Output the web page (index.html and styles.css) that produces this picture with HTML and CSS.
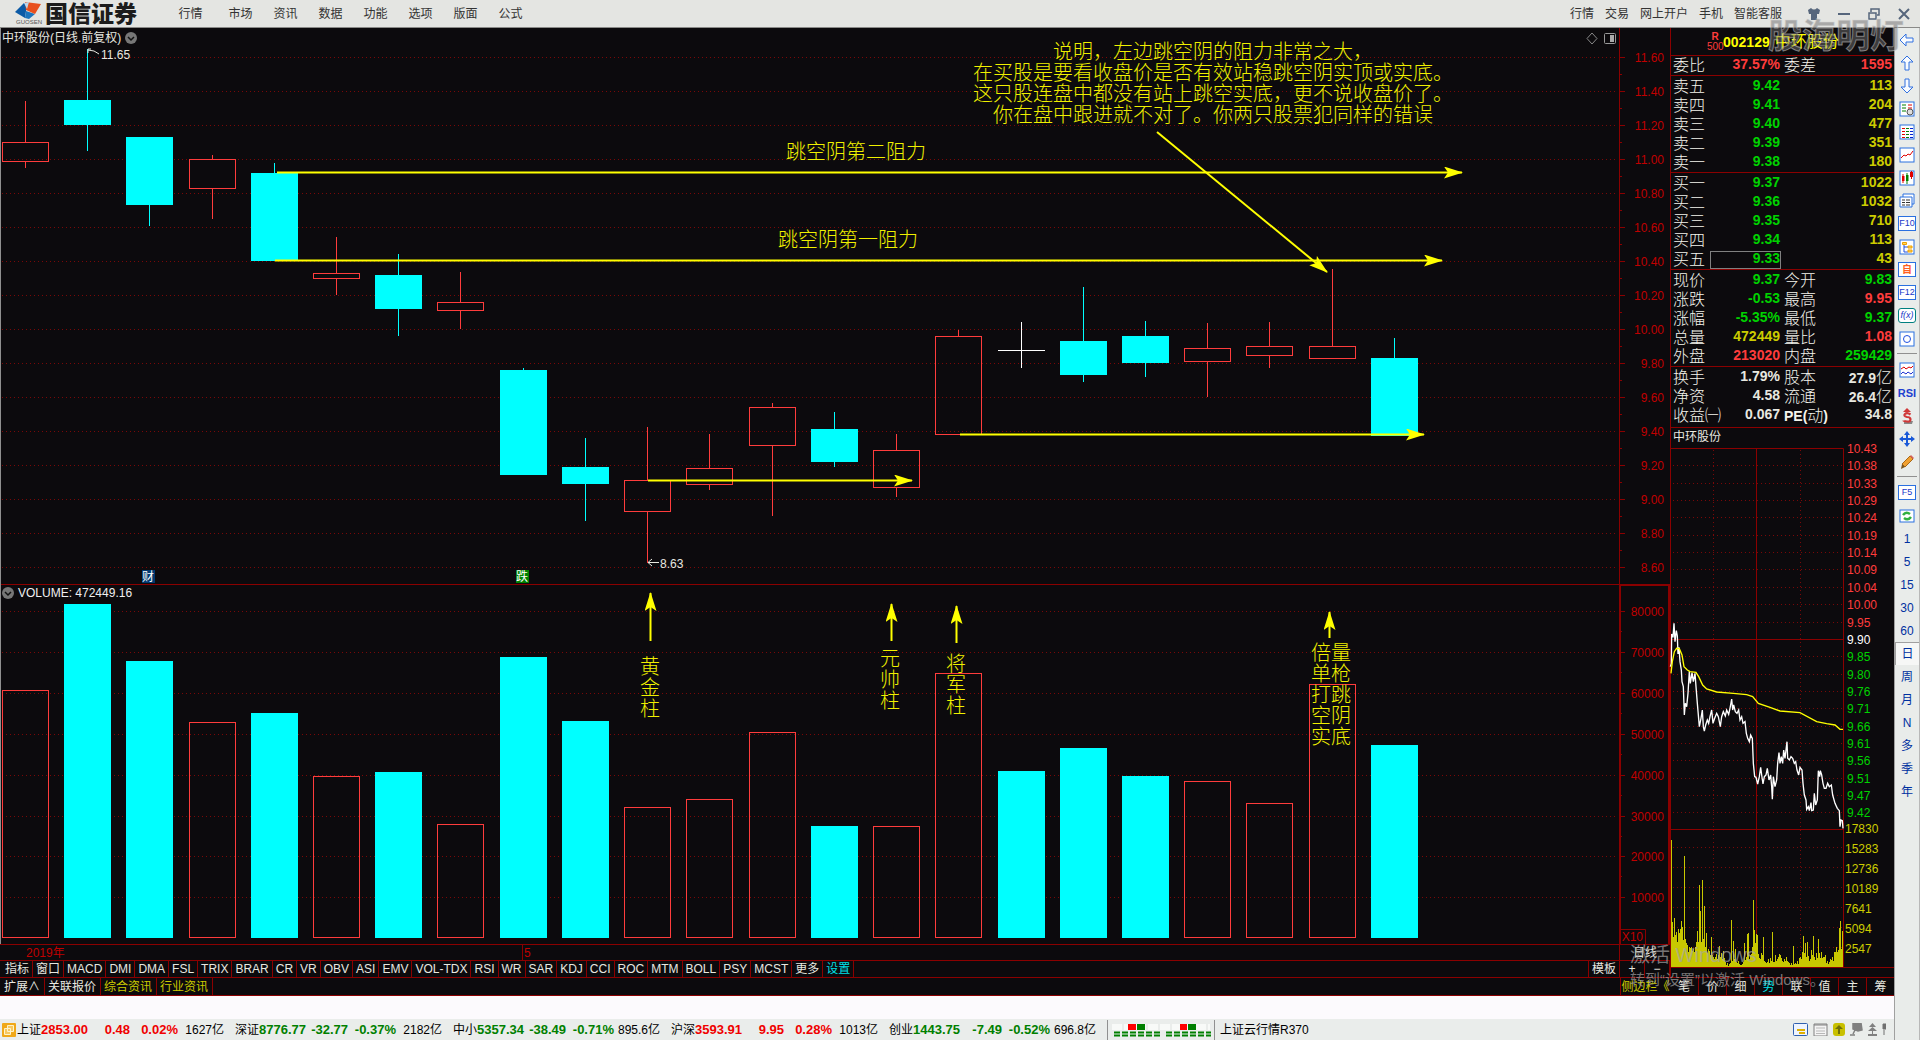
FILE: index.html
```html
<!DOCTYPE html>
<html lang="zh-CN">
<head>
<meta charset="utf-8">
<title>国信证券 - 中环股份</title>
<link rel="stylesheet" href="styles.css">
</head>
<body>
<header class="titlebar">
  <div class="brand">
    <div class="brand-mark">
      <svg width="28" height="17" viewBox="0 0 28 17" aria-hidden="true">
        <path d="M0 10 9 1l3 1-2 14z" fill="#0b5aa6"/><path d="M10 16 11 9l9 3-6 5z" fill="#1c74bd"/>
        <path d="M10 0 26 2l-6 10-9-4z" fill="#e8501e"/><path d="M9 1l5-1-2 7z" fill="#bdd5ea"/>
      </svg>
      <small>GUOSEN</small>
    </div>
    <strong>国信证券</strong>
  </div>
  <nav class="menu">
    <button>行情</button><button>市场</button><button>资讯</button><button>数据</button><button>功能</button><button>选项</button><button>版面</button><button>公式</button>
  </nav>
  <nav class="links">
    <button>行情</button><button>交易</button><button>网上开户</button><button>手机</button><button>智能客服</button>
  </nav>
  <div class="window-controls">
    <button aria-label="换肤"><svg width="12" height="12" viewBox="0 0 12 12"><path d="M0 2 3 0q3 3 6 0l3 2-1 4H9v6H3V6H1z" fill="#56667c"/></svg></button>
    <button aria-label="最小化"><svg width="12" height="12" viewBox="0 0 12 12"><path d="M0 6h12" stroke="#56667c" stroke-width="2"/></svg></button>
    <button aria-label="还原"><svg width="12" height="12" viewBox="0 0 12 12"><path d="M3 4V1h8v6H9M1 5h7v6H1z" fill="none" stroke="#56667c" stroke-width="1.5"/></svg></button>
    <button aria-label="关闭"><svg width="12" height="12" viewBox="0 0 12 12"><path d="M1 1l10 10M11 1 1 11" stroke="#56667c" stroke-width="2"/></svg></button>
  </div>
  <div class="watermark-name">股海明灯</div>
</header>

<div class="shell">
  <main class="desk">
    <div class="work">
      <section class="charts">
        <svg id="kline" class="kline" viewBox="0 28 1670 916" role="img" aria-label="中环股份日线"></svg>
        <div class="dates"><span>2019年</span><span class="month">5</span><button class="period">日线</button></div>
        <div class="tabs indicators" id="indicators"></div>
      </section>

      <aside class="quote">
        <h1><span class="flag"><b>R</b><i>500</i></span><b>002129</b><span class="name">中环股份</span></h1>
        <table><colgroup><col class="c1"><col class="c2"><col class="c3"><col></colgroup>
          <tbody><tr><th>委比</th><td class="r">37.57%</td><th>委差</th><td class="r">1595</td></tr></tbody>
          <tbody>
            <tr><th>卖五</th><td class="g">9.42</td><th></th><td class="y">113</td></tr>
            <tr><th>卖四</th><td class="g">9.41</td><th></th><td class="y">204</td></tr>
            <tr><th>卖三</th><td class="g">9.40</td><th></th><td class="y">477</td></tr>
            <tr><th>卖二</th><td class="g">9.39</td><th></th><td class="y">351</td></tr>
            <tr><th>卖一</th><td class="g">9.38</td><th></th><td class="y">180</td></tr>
          </tbody>
          <tbody>
            <tr><th>买一</th><td class="g">9.37</td><th></th><td class="y">1022</td></tr>
            <tr><th>买二</th><td class="g">9.36</td><th></th><td class="y">1032</td></tr>
            <tr><th>买三</th><td class="g">9.35</td><th></th><td class="y">710</td></tr>
            <tr><th>买四</th><td class="g">9.34</td><th></th><td class="y">113</td></tr>
            <tr><th>买五</th><td class="g picked">9.33</td><th></th><td class="y">43</td></tr>
          </tbody>
          <tbody>
            <tr><th>现价</th><td class="g">9.37</td><th>今开</th><td class="g">9.83</td></tr>
            <tr><th>涨跌</th><td class="g">-0.53</td><th>最高</th><td class="r">9.95</td></tr>
            <tr><th>涨幅</th><td class="g">-5.35%</td><th>最低</th><td class="g">9.37</td></tr>
            <tr><th>总量</th><td class="y">472449</td><th>量比</th><td class="r">1.08</td></tr>
            <tr><th>外盘</th><td class="r">213020</td><th>内盘</th><td class="g">259429</td></tr>
          </tbody>
          <tbody>
            <tr><th>换手</th><td>1.79%</td><th>股本</th><td>27.9<span>亿</span></td></tr>
            <tr><th>净资</th><td>4.58</td><th>流通</th><td>26.4<span>亿</span></td></tr>
            <tr><th>收益㈠</th><td>0.067</td><th><b>PE(</b>动<b>)</b></th><td>34.8</td></tr>
          </tbody>
        </table>
        <h2>中环股份</h2>
        <svg id="intraday" class="intraday" viewBox="1671 448 223 529" role="img" aria-label="中环股份分时"></svg>
      </aside>
      <div class="activate"><p>激活 Windows</p><p class="hint">转到“设置”以激活 Windows。</p></div>
    </div>
    <div class="foot">
      <div class="tabs"><button>扩展∧</button><button>关联报价</button><button class="gold">综合资讯</button><button class="gold">行业资讯</button></div>
      <button class="collapse">侧边栏《</button>
      <div class="side-tabs"><button>笔</button><button>价</button><button>细</button><button class="on">势</button><button>联</button><button>值</button><button>主</button><button>筹</button></div>
    </div>
    <div class="blank"></div>
    <footer class="status">
      <svg width="14" height="14" viewBox="0 0 14 14" aria-hidden="true"><rect width="14" height="14" rx="1" fill="#f0a818"/><path d="M5.500 2.500h6v6h-6zM2.500 5.500h6v6h-6z" fill="#f6c860" stroke="#fff3c8"/></svg>
      <div class="indices">
        <div class="index up"><span>上证</span><b>2853.00</b><b>0.48</b><b>0.02%</b><span>1627亿</span></div>
        <div class="index"><span>深证</span><b>8776.77</b><b>-32.77</b><b>-0.37%</b><span>2182亿</span></div>
        <div class="index"><span>中小</span><b>5357.34</b><b>-38.49</b><b>-0.71%</b><span>895.6亿</span></div>
        <div class="index up"><span>沪深</span><b>3593.91</b><b>9.95</b><b>0.28%</b><span>1013亿</span></div>
        <div class="index"><span>创业</span><b>1443.75</b><b>-7.49</b><b>-0.52%</b><span>696.8亿</span></div>
      </div>
      <div class="heat"><svg width="100" height="14" viewBox="0 0 100 14" aria-hidden="true">
        <path d="M3 11h46M55 11h46" stroke="#008000" stroke-width="5" stroke-dasharray="6 2"/><path d="M2 11h98" stroke="#e9ecea"/>
        <path d="M1 4h98" stroke="#f8faf8" stroke-width="6" stroke-dasharray="10 2"/>
        <path d="M17 1h8v6h-8zM69 1h7v6h-7z" fill="#f00"/><path d="M26 1h8v6h-8zM77 1h8v6h-8z" fill="#008000"/></svg></div>
      <span class="server">上证云行情R370</span>
      <div class="tray">
        <svg width="15" height="13" viewBox="0 0 15 13"><rect x=".5" y=".5" width="14" height="12" rx="1" fill="#eef4ff" stroke="#3060b0"/><path d="M4 7h8M6 10h6" stroke="#e0b000" stroke-width="2"/></svg>
        <svg width="15" height="13" viewBox="0 0 15 13"><path d="M1 1h13v12H1zM1 2h13" fill="#f4f4f4" stroke="#808080"/><path d="M3 5h9M3 8h9M3 10.500h9" stroke="#b8b8b8"/></svg>
        <svg width="12" height="13" viewBox="0 0 12 13"><rect width="12" height="13" rx="3" fill="#c8c000"/><path d="M6 2 10 6H7v5H5V6H2z" fill="#70700a"/></svg>
        <svg width="13" height="13" viewBox="0 0 13 13"><path d="M3 0h8l1 7-4 1-5-2zM5 7 3 11M0 12h5" fill="#808080" stroke="#808080" stroke-width="1.500"/></svg>
        <svg width="9" height="13" viewBox="0 0 9 13"><path d="M4.500 0 8 4H1zM4.500 4 9 8H0zM4 8h1v3h4v2H0v-2h4z" fill="#808080"/></svg>
        <svg width="4" height="13" viewBox="0 0 4 13"><path d="M1 1h3v5H1zM2 7v5" fill="#707070" stroke="#707070"/></svg>
      </div>
    </footer>
  </main>

  <nav class="toolbar">
    <button aria-label="后退"><svg viewBox="0 0 16 16"><path d="M1 8 7 2v4h7v4H7v4z" class="arrow"/></svg></button>
    <button aria-label="上"><svg viewBox="0 0 16 16"><path d="M8 1 14 7h-4v8H6V7H2z" class="arrow"/></svg></button>
    <button aria-label="下"><svg viewBox="0 0 16 16"><path d="M8 15 14 9h-4V1H6v8H2z" class="arrow"/></svg></button>
    <button aria-label="自选报价"><svg viewBox="0 0 16 16"><rect class="box" x="1" y="1" width="14" height="14"/><path d="M3 4h4M3 7h4M3 10h4" stroke="#008000"/><path d="M9 4h4M9 7h4" stroke="#e00000"/><circle cx="11" cy="11" r="3" fill="#ddd" stroke="#555"/></svg></button>
    <button aria-label="行情列表"><svg viewBox="0 0 16 16"><rect class="box" x="1" y="1" width="14" height="14"/><path d="M3 4.500h3M3 7.500h3M3 10.500h3M3 13.500h3" stroke="#e00000"/><path d="M7 4.500h3M7 7.500h3M7 10.500h3M7 13.500h3" stroke="#008000"/><path d="M11 4.500h3M11 7.500h3M11 10.500h3M11 13.500h3" stroke="#0020d0"/></svg></button>
    <button aria-label="分时走势"><svg viewBox="0 0 16 16"><rect class="box" x="1" y="1" width="14" height="14"/><path d="M2 11l3-3 2 1 2-2 2 1 3-4" fill="none" stroke="#e00000"/></svg></button>
    <button aria-label="K线"><svg viewBox="0 0 16 16"><rect class="box" x="1" y="1" width="14" height="14"/><path d="M4 4v9M12.500 1v8" stroke="#e00000"/><path d="M3 6h2.500v5H3zM11 2h3v5h-3z" fill="#e00000"/><path d="M8 3v11" stroke="#008000"/><path d="M7 5h2.500v6H7z" fill="#008000"/></svg></button>
    <button aria-label="多窗口"><svg viewBox="0 0 16 16"><path class="box" d="M4 4V1h11v10h-2"/><path class="box" d="M1 4h12v10H1z"/><path d="M3 7h3m1 0h4M3 9.500h3m1 0h4M3 12h3m1 0h4" stroke="#333"/></svg></button>
    <button class="key">F10</button>
    <button aria-label="树形"><svg viewBox="0 0 16 16"><rect class="box" x="1" y="1" width="14" height="14"/><path d="M5 5v8h4M5 8h4" fill="none" stroke="#2050e0"/><path d="M3.500 3.500h4v2h-4zM9 7h4v2H9zM9 11h4v2H9z" fill="#ffd860" stroke="#f0a000"/></svg></button>
    <button class="key own">自</button>
    <button class="key">F12</button>
    <button class="key fx">f(x)</button>
    <button aria-label="圆"><svg viewBox="0 0 16 16"><rect class="box" x="1" y="1" width="14" height="14"/><circle cx="8" cy="8" r="3.500" fill="none" stroke="#2050e0"/></svg></button>
    <hr>
    <button aria-label="叠加"><svg viewBox="0 0 16 16"><rect class="box" x="1" y="1" width="14" height="14"/><path d="M2 7l3-2 2 2 3-2 2 1 2-2" fill="none" stroke="#e00000"/><path d="M2 12l2-2 3 2 2-2 3 2 2-2" fill="none" stroke="#2030d0"/></svg></button>
    <button class="rsi">RSI</button>
    <button aria-label="资金"><svg viewBox="0 0 16 16"><path d="M5 13h9l-1 3H5z" fill="#888"/><path d="M8 0 12 4H4z" fill="#d03838"/><path d="M11.500 6.500Q8 4 6 6t2 3q3.500 0 3.500 2.500t-3.500 2-3.500-1" fill="none" stroke="#d03838" stroke-width="2.200"/></svg></button>
    <button aria-label="移动"><svg viewBox="0 0 16 16"><path d="M8 0 11 4H5zM8 16 5 12h6zM0 8 4 5v6zM16 8 12 11V5zM7 3h2v4h4v2H9v4H7V9H3V7h4z" fill="#1858d8"/></svg></button>
    <button aria-label="画线"><svg viewBox="0 0 16 16"><path d="M3 10 11 2l3 3-8 8z" fill="#f0a030" stroke="#a86818"/><path d="M3 10l3 3-4 2z" fill="#7a5520"/><path d="M11 2l1-1 3 3-1 1z" fill="#d86060"/></svg></button>
    <hr>
    <button class="key">F5</button>
    <button aria-label="刷新"><svg viewBox="0 0 16 16"><rect class="box" x="1" y="2" width="14" height="12"/><path d="M4 7q3-4 7-1M12 9q-3 4-7 1" fill="none" stroke="#30b040" stroke-width="2.500"/></svg></button>
    <button>1</button><button>5</button><button>15</button><button>30</button><button>60</button><button class="active">日</button><button>周</button><button>月</button><button>N</button><button>多</button><button>季</button><button>年</button>
  </nav>
</div>
<script src="charts.js"></script>
</body>
</html>
```
FILE: styles.css
```css
* { box-sizing: border-box; margin: 0; padding: 0; }
body {
  min-height: 100vh;
  display: flex;
  flex-direction: column;
  background: #e9ecea;
  color: #e8e8e0;
  font: 12px/14px "Liberation Sans", "Noto Sans CJK SC", sans-serif;
  overflow-x: hidden;
}
button {
  background: none;
  border: 0;
  color: inherit;
  font: inherit;
  white-space: nowrap;
  cursor: pointer;
}
svg { display: block; }

/* title bar */
.titlebar {
  position: relative;
  display: flex;
  align-items: center;
  height: 28px;
  background: #e4e5e2;
  border-bottom: 1px solid #8a8a88;
  color: #333;
}
.brand { display: flex; align-items: center; width: 168px; padding-left: 15px; gap: 2px; }
.brand-mark { width: 28px; }
.brand small { display: block; font-size: 6px; line-height: 6px; text-align: center; color: #555; }
.brand strong { font-size: 23px; line-height: 26px; font-weight: 900; color: #1c1c1c; white-space: nowrap; }
.menu { display: flex; flex: 1; }
.menu button { width: 45px; height: 26px; }
.menu button:first-child { margin-right: 5px; }
.links { display: flex; gap: 11px; }
.window-controls { display: flex; gap: 18px; padding: 0 10px 0 26px; }
.window-controls svg { margin: 0 auto; }
.watermark-name {
  position: absolute;
  right: 16px;
  top: 14px;
  z-index: 3;
  font-size: 34px;
  line-height: 44px;
  font-weight: 700;
  color: rgba(110, 110, 110, .5);
  -webkit-text-stroke: 1px rgba(215, 215, 215, .5);
  pointer-events: none;
}

/* frame */
.shell { display: flex; flex: 1; }
.desk { flex: 1; min-width: 0; display: flex; flex-direction: column; }
.work { position: relative; display: grid; grid-template-columns: minmax(0, 1fr) 224px; background: #0c0a0d; }
.charts { min-width: 0; }
.kline, .intraday { width: 100%; height: auto; overflow: visible; }
.kline text, .intraday text { font-family: "Liberation Sans", "Noto Sans CJK SC", sans-serif; font-size: 12px; }
.kline .note { font-family: "Noto Sans CJK SC", sans-serif; font-size: 20px; font-weight: 300; fill: #f0f000; text-anchor: middle; }
.kline .axis { fill: #c00000; text-anchor: end; }
.line { stroke: #8b0000; fill: none; }
.dots { stroke: #7a0808; stroke-dasharray: 1 3; fill: none; }

.dates {
  display: grid;
  grid-template-columns: 523px 1fr 51px;
  height: 16px;
  border-top: 1px solid #8b0000;
  color: #c00000;
  line-height: 16px;
}
.dates span:first-child { padding-left: 26px; border-right: 1px solid #8b0000; }
.month { padding-left: 1px; }
.period { border-left: 1px solid #8b0000; color: #e8e8e0; text-align: center; }
.tabs { display: flex; min-width: 0; }
.tabs button { padding: 0 3px; border-right: 1px solid #8b0000; line-height: 16px; }
.indicators { height: 17px; border-top: 1px solid #8b0000; padding-left: 2px; }
.indicators .push { margin-left: auto; padding: 0 3px; border-left: 1px solid #8b0000; }
.indicators .zoom { width: 25px; }
.indicators .on, .side-tabs .on { color: #00e0e8; }

/* quote panel */
.quote { border-left: 1px solid #8b0000; background: #0c0a0d; }
.quote h1 {
  display: flex;
  align-items: center;
  height: 28px;
  padding-left: 36px;
  border-bottom: 1px solid #8b0000;
  font-size: 14px;
  color: #ffff00;
}
.flag { width: 16px; font-size: 10px; line-height: 10px; color: #ff3c3c; text-align: center; }
.flag b, .flag i { display: block; font-style: normal; }
.flag i { font-weight: 400; }
.quote .name { padding-left: 5px; font-size: 16px; font-weight: 400; }
.quote table { width: 100%; table-layout: fixed; border-collapse: separate; border-spacing: 0; }
.c1 { width: 38px; }
.c2 { width: 73px; }
.c3 { width: 45px; }
.quote tr { height: 19px; }
.quote th, .quote td { vertical-align: top; line-height: 17px; white-space: nowrap; }
.quote th { padding-left: 2px; font: 16px/17px "Noto Sans CJK SC", sans-serif; font-weight: 300; color: #f4f4ec; text-align: left; }
.quote th b { font: bold 14px/17px "Liberation Sans", sans-serif; }
.quote td { padding-right: 2px; font-size: 14px; font-weight: 700; text-align: right; }
.quote td span { font: 300 16px/17px "Noto Sans CJK SC", sans-serif; }
.quote tbody tr:last-child > * { height: 20px; border-bottom: 1px solid #8b0000; }
.quote tbody + tbody tr:first-child > * { height: 20px; padding-top: 1px; }
.quote tbody:last-child tr:last-child > * { height: 22px; padding-bottom: 2px; }
.quote .picked { outline: 1px solid #808080; outline-offset: -2px; }
.r { color: #ff3c3c; }
.g { color: #00d200; }
.y { color: #cccc00; }
.quote h2 { height: 20px; padding-left: 2px; font-size: 12px; line-height: 19px; font-weight: 400; }

.activate { position: absolute; right: 72px; bottom: -14px; z-index: 2; width: 192px; color: rgba(165, 165, 165, .7); pointer-events: none; white-space: nowrap; }
.activate p { font-size: 20px; line-height: 28px; }
.activate .hint { font-size: 15px; line-height: 22px; }

/* bottom rows */
.foot { display: grid; grid-template-columns: 1fr 50px 224px; height: 19px; background: #0c0a0d; border: solid #8b0000; border-width: 1px 0; }
.foot .tabs { padding-left: 1px; }
.foot .tabs button { padding: 0 4px 0 3px; }
.foot .gold, .collapse { color: #cccc00; }
.collapse { border-left: 1px solid #8b0000; overflow: hidden; }
.side-tabs { display: grid; grid-template-columns: repeat(8, 1fr); }
.side-tabs button + button { border-left: 1px solid #8b0000; }
.blank { height: 23px; background: #fcfafd; }
.status { display: flex; align-items: center; height: 21px; padding: 0 8px 0 2px; background: #eaedeb; color: #000; }
.indices { display: flex; gap: 11px; padding-left: 1px; }
.index { display: grid; grid-template-columns: 24px 46px 43px 48px 46px; color: #008000; text-align: right; white-space: nowrap; }
.index span { color: #000; text-align: left; }
.index span:last-child { text-align: right; }
.index b { font-size: 13px; }
.index b:nth-child(2) { text-align: left; }
.index.up { color: #f00000; }
.heat { margin-left: 11px; padding: 3px 3px; border: solid #909090; border-width: 0 1px; }
.server { padding-left: 5px; flex: 1; }
.tray { display: flex; align-items: center; gap: 5px; }

/* tool strip */
.toolbar { display: flex; flex-direction: column; width: 26px; background: #e9ecea; border-left: 1px solid #a0a0a0; border-right: 1px solid #b8b8b8; color: #0030a0; }
.toolbar button { display: flex; align-items: center; justify-content: center; height: 23px; }
.toolbar svg { width: 16px; height: 16px; }
.toolbar hr { height: 2px; margin: 3px 2px; border: 0; border-top: 1px solid #909090; }
.arrow { fill: #f8fbff; stroke: #3070e0; stroke-width: 1; }
.box { fill: #fff; stroke: #2a70e0; }
.toolbar .key { height: 15px; margin: 4px 3px; background: #fff; border: 1px solid #2a70e0; color: #1838c8; font-size: 9px; line-height: 13px; }
.toolbar .own { color: #ff6020; font-weight: 700; font-size: 10px; }
.toolbar .fx { border-color: #008080; border-radius: 3px; font-style: italic; }
.toolbar .rsi { font-weight: 700; font-size: 11px; color: #2040d0; }
.toolbar .active { border: solid #a0a0a0; border-width: 1px 0 0 1px; background: #f6f7f6; }
```
FILE: charts.js
```js
const RED = '#ff3c3c', CYAN = '#00ffff';
const line = (x1, y1, x2, y2, cls) => `<path class="${cls}" d="M${x1} ${y1}L${x2} ${y2}"/>`;
const text = (x, y, s, attrs = '') => `<text x="${x}" y="${y}" ${attrs}>${s}</text>`;

/* [centre x, high, body top, body bottom, low, kind, volume top] */
const days = [
  [25, 101, 142, 162, 168, 'up', 690], [87, 49, 100, 125, 151, 'down', 604], [149, 137, 137, 205, 226, 'down', 661],
  [212, 155, 159, 189, 219, 'up', 722], [274, 163, 173, 261, 261, 'down', 713], [336, 237, 273, 279, 295, 'up', 776],
  [398, 254, 275, 309, 336, 'down', 772], [460, 272, 302, 311, 329, 'up', 824], [523, 368, 370, 475, 475, 'down', 657],
  [585, 438, 467, 484, 521, 'down', 721], [647, 427, 480, 512, 563, 'up', 807], [709, 434, 468, 485, 490, 'up', 799],
  [772, 403, 407, 446, 516, 'up', 732], [834, 412, 429, 462, 467, 'down', 826], [896, 434, 450, 488, 497, 'up', 826],
  [958, 330, 336, 435, 435, 'up', 673], [1021, 322, 350, 351, 368, 'flat', 771], [1083, 287, 341, 375, 382, 'down', 748],
  [1145, 321, 336, 363, 377, 'down', 776], [1207, 323, 348, 362, 397, 'up', 781], [1269, 322, 346, 356, 368, 'up', 803],
  [1332, 269, 346, 359, 359, 'up', 684], [1394, 338, 358, 436, 436, 'down', 745]
];

let k = '<defs><marker id="tip" markerUnits="userSpaceOnUse" markerWidth="20" markerHeight="14" refX="18" refY="6" orient="auto"><path d="M0 0 19 6 0 12 4 6z" fill="#ffff00"/></marker></defs>';
for (let i = 0; i < 16; i++) {
  const y = 57.5 + i * 34;
  k += line(2, y, 1616, y, 'dots') + line(1620, y, 1625, y, 'line');
  if (i < 15) k += line(1620, y + 17, 1622, y + 17, 'line');
  k += text(1664, y + 4.5, (11.6 - i * 0.2).toFixed(2), 'class="axis"');
}
for (let i = 0; i < 8; i++) {
  const y = 611.5 + Math.round(i * 40.9);
  k += line(2, y, 1616, y, 'dots') + line(1620, y, 1625, y, 'line');
  if (i < 7) k += line(1620, y + 20, 1622, y + 20, 'line');
  k += text(1664, y + 4.5, 80000 - i * 10000, 'class="axis"');
}
k += '<path class="line" d="M0 584.500H1670M1619.500 28V944"/><path class="line" stroke-width="2" d="M1620 944V585H1669V944"/><path class="line" d="M1620 929.500h25.500V944"/>';
k += text(1643, 941, 'X10', 'class="axis"');
k += '<path d="M.5 28V944" stroke="#909090"/>';

days.forEach(([x, hi, top, bot, lo, kind, vol]) => {
  const cx = x + .5;
  if (kind === 'up') {
    k += `<path d="M${cx} ${hi}V${top}M${cx} ${bot}V${lo}" stroke="${RED}"/>`;
    k += `<rect x="${x - 22.5}" y="${top + .5}" width="46" height="${bot - top - 1}" fill="none" stroke="${RED}"/>`;
    k += `<rect x="${x - 22.5}" y="${vol + .5}" width="46" height="${937 - vol}" fill="none" stroke="${RED}"/>`;
  } else {
    const c = kind === 'flat' ? '#ffffff' : CYAN;
    k += `<path d="M${cx} ${hi}V${lo}" stroke="${c}"/><rect x="${x - 23}" y="${top}" width="47" height="${bot - top}" fill="${c}"/>`;
    k += `<rect x="${x - 23}" y="${vol}" width="47" height="${938 - vol}" fill="${CYAN}"/>`;
  }
});

k += text(2, 42, '中环股份(日线.前复权)', 'fill="#e8e8e0"') + text(18, 597, 'VOLUME: 472449.16', 'fill="#f0f0f0"');
[[131, 38], [8, 593]].forEach(([x, y]) => {
  k += `<circle cx="${x}" cy="${y}" r="6" fill="#777"/><path d="M${x - 3} ${y - 1}l3 3 3-3" fill="none" stroke="#111" stroke-width="1.500"/>`;
});
k += text(101, 59, '11.65', 'fill="#e8e8e0"') + text(660, 568, '8.63', 'fill="#e8e8e0"');
k += '<path d="M99 54l-5-3-6-1M88 53v-4h3M659 562.500h-11M652 559l-4 3.500 4 3.500" fill="none" stroke="#e8e8e0"/>';
k += '<rect x="142" y="570" width="13" height="13" fill="#003870"/>' + text(142, 581, '财', 'fill="#fff"');
k += '<rect x="516" y="570" width="13" height="13" fill="#008000"/>' + text(516, 581, '跌', 'fill="#fff"');
k += '<path d="M1592 33l5 5.500-5 5.500-5-5.500z" fill="none" stroke="#888"/><rect x="1604.500" y="33.500" width="11" height="10" rx="1" fill="none" stroke="#999"/><path d="M1610 35h4v7h-4z" fill="#aaa"/>';

[[277, 172.5, 1462, 172.5], [275, 260.5, 1442, 260.5], [648, 480.5, 912, 480.5], [960, 434.5, 1424, 434.5], [1157, 132, 1327, 272],
 [650.5, 641, 650.5, 593], [891.5, 641, 891.5, 604], [956.5, 643, 956.5, 606], [1329.5, 638, 1329.5, 612]].forEach(([a, b, c, d]) => {
  k += `<path d="M${a} ${b}L${c} ${d}" stroke="#ffff00" stroke-width="2" marker-end="url(#tip)"/>`;
});

[[1213, 59, '说明，左边跳空阴的阻力非常之大，'], [1213, 80, '在买股是要看收盘价是否有效站稳跳空阴实顶或实底。'],
 [1213, 101, '这只股连盘中都没有站上跳空实底，更不说收盘价了。'], [1213, 122, '你在盘中跟进就不对了。你两只股票犯同样的错误'],
 [856, 159, '跳空阴第二阻力'], [848, 247, '跳空阴第一阻力'],
 [650, 674, '黄'], [650, 695, '金'], [650, 716, '柱'], [890, 666, '元'], [890, 687, '帅'], [890, 708, '柱'],
 [956, 671, '将'], [956, 692, '军'], [956, 713, '柱'],
 [1331, 660, '倍量'], [1331, 681, '单枪'], [1331, 702, '打跳'], [1331, 723, '空阴'], [1331, 744, '实底']
].forEach(([x, y, s]) => { k += text(x, y, s, 'class="note"'); });
document.getElementById('kline').innerHTML = k;

document.getElementById('indicators').innerHTML =
  '指标 窗口 MACD DMI DMA FSL TRIX BRAR CR VR OBV ASI EMV VOL-TDX RSI WR SAR KDJ CCI ROC MTM BOLL PSY MCST 更多'
    .split(' ').map(s => `<button>${s}</button>`).join('') +
  '<button class="on">设置</button><button class="push">模板</button><button class="zoom">+</button><button class="zoom">−</button>';

/* intraday panel */
const levels = ['10.43', '10.38', '10.33', '10.29', '10.24', '10.19', '10.14', '10.09', '10.04', '10.00', '9.95', '9.90',
  '9.85', '9.80', '9.76', '9.71', '9.66', '9.61', '9.56', '9.51', '9.47', '9.42'];
let m = '';
levels.forEach((s, i) => {
  const y = Math.round(448 + i * 17.35) + .5;
  if (i && i !== 11) m += line(1673, y, 1843, y, 'dots');
  m += text(1847, y + 4.5, s, `fill="${i < 11 ? RED : i === 11 ? '#ffffff' : '#00d200'}"`);
});
[17830, 15283, 12736, 10189, 7641, 5094, 2547].forEach((s, i) => {
  const y = 828.5 + i * 20;
  if (i) m += line(1673, y - 1, 1843, y - 1, 'dots');
  m += text(1845, y + 4.5, s, 'fill="#cccc00"');
});
m += '<path class="dots" d="M1713.500 450V967M1800.500 450V967"/><path class="line" d="M1671 448.500H1843.500V967M1671 639.500H1843M1671 829.500H1843M1756.500 448V967M1671 967.500H1894"/>';

const volumes = [127,45,30,49,32,35,25,38,34,38,46,40,27,111,28,24,22,15,20,19,20,16,18,15,20,25,36,25,82,56,25,87,28,61,20,34,14,18,16,12,
  30,12,10,8,10,13,8,12,21,10,14,8,16,9,5,2,4,1,3,4,47,6,26,8,18,5,4,6,3,2,2,3,5,24,7,10,33,34,8,12,13,20,67,37,24,33,32,13,9,8,14,12,30,
  6,5,4,5,8,4,9,6,35,5,5,12,6,8,10,13,12,9,6,5,8,6,10,6,5,4,2,4,2,21,3,4,3,6,3,9,10,8,15,31,14,24,10,25,11,6,8,17,12,31,10,7,14,9,28,14,
  9,15,9,10,10,12,4,6,3,5,8,7,10,6,15,15,20,15,17,39,46,18,36];
m += '<path stroke="#c8c800" d="' + volumes.map((v, i) => `M${1671.5 + i} 967v-${v}`).join('') + '"/>';

/* traced in thirds of a pixel */
m += `<g transform="translate(1560 530) scale(.33333)" fill="none" stroke-width="4">
<polyline stroke="#ffffff" points="331,410 334,400 335,312 339,322 342,280 345,335 349,302 352,318 354,372 357,352 360,395 364,420 366,455 370,470 373,555 376,520 380,530 384,490 388,425 391,460 396,428 400,455 405,430 408,470 412,520 418,590 423,565 427,540 430,590 433,603 437,585 442,570 446,580 450,560 455,540 459,580 464,565 470,550 475,560 481,590 485,560 490,545 496,558 500,540 506,553 510,535 515,507 518,540 521,525 526,545 531,550 536,540 540,570 545,560 549,580 555,575 559,610 563,625 568,635 572,615 577,625 580,700 584,740 588,742 593,762 598,740 602,712 605,735 609,762 613,740 618,735 622,715 627,750 632,735 635,770 637,808 640,740 645,770 650,750 653,700 657,668 660,700 664,680 668,700 671,660 675,685 681,635 683,685 688,690 693,680 698,685 703,700 707,695 711,720 716,735 720,712 726,720 729,760 733,795 738,810 740,838 745,830 748,842 753,818 755,842 760,840 763,790 767,825 772,810 775,722 779,740 781,722 785,735 789,760 793,775 798,775 803,760 808,770 814,765 818,795 825,820 832,835 838,842 840,890 843,870 847,872 849,895"/>
<polyline stroke="#ffff00" points="333,430 337,395 343,365 350,355 358,356 366,375 372,410 382,420 390,425 408,427 416,440 428,465 440,477 470,486 520,490 560,494 578,500 595,520 630,532 660,543 720,548 770,575 800,581 825,585 840,598 849,598"/></g>`;
document.getElementById('intraday').innerHTML = m;
```
